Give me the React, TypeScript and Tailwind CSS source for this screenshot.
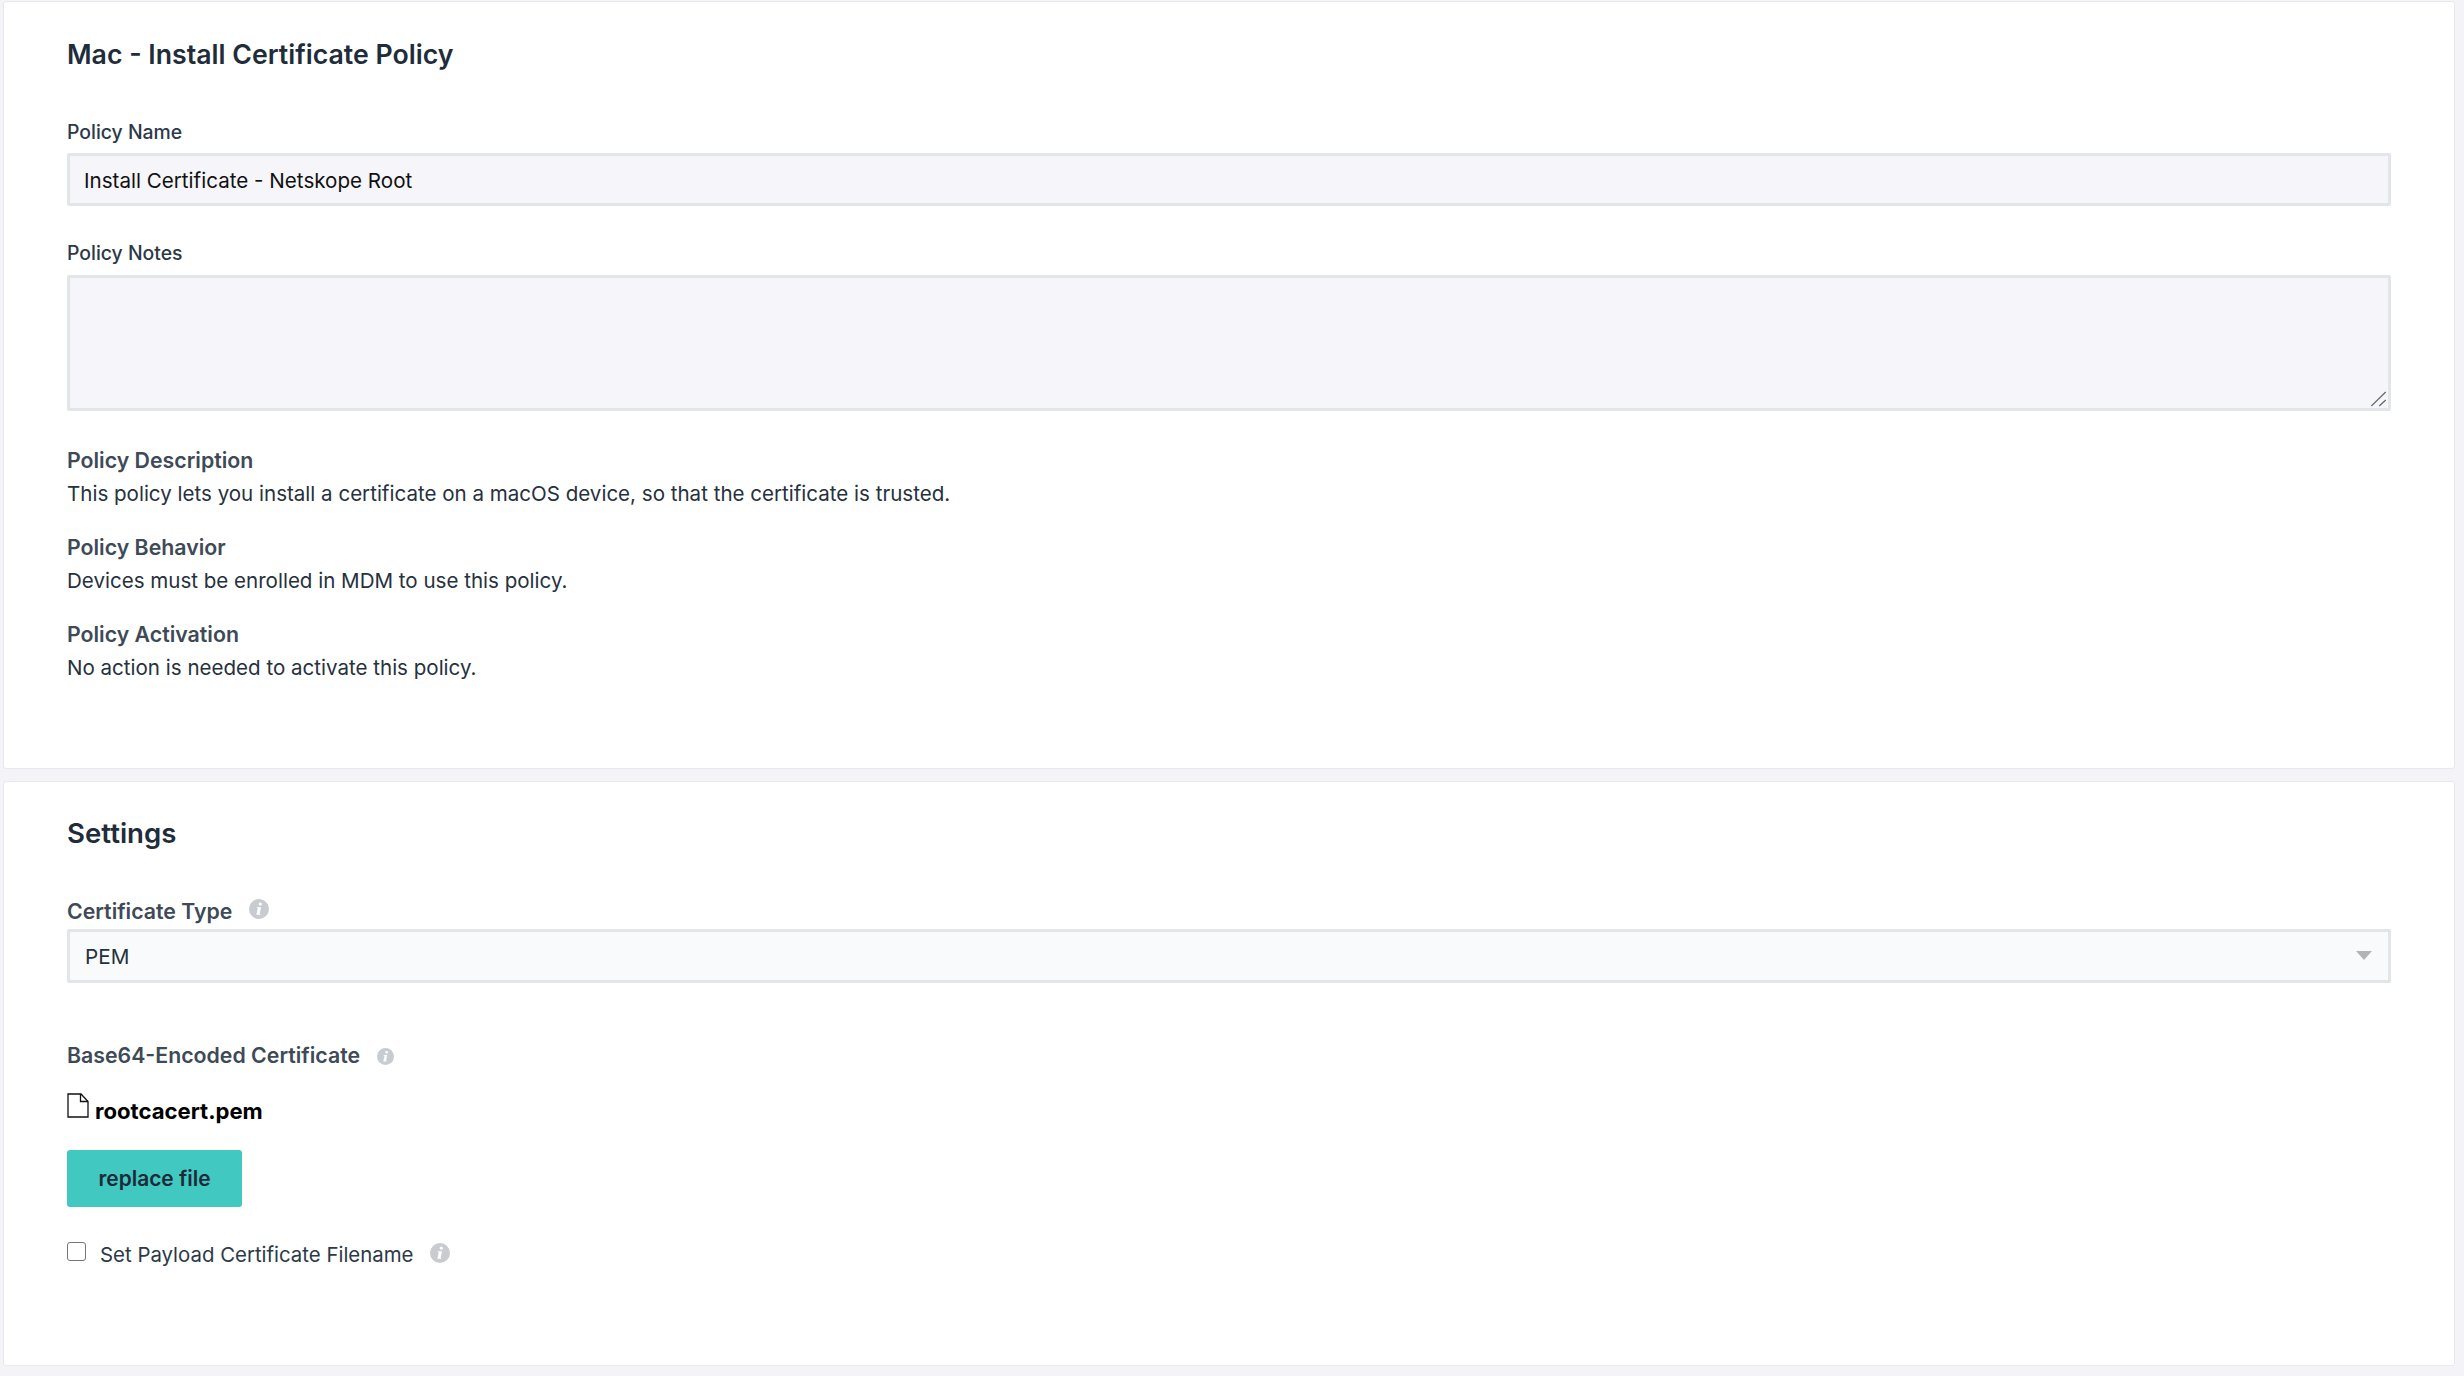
import { useState } from "react";

const font = "font-['Inter',sans-serif]";

function InfoIcon({ size = 20 }: { size?: number }) {
  return (
    <svg width={size} height={size} viewBox="0 0 20 20" className="shrink-0">
      <circle cx="10" cy="10" r="10" fill="#c8ccd0" />
      <path d="M11.3 3.4a1.7 1.7 0 1 1 0 3.4 1.7 1.7 0 0 1 0-3.4zM7.9 8.3h4.2l-1.4 6.3c0 .3.1.4.8.3l-.2.9H7.4l1.3-6.4c.1-.3-.1-.4-1-.4z" fill="#fff" />
    </svg>
  );
}

function FileIcon() {
  return (
    <svg width="22" height="25" viewBox="0 0 22 25" fill="none" stroke="#111" strokeWidth="1.3" className="shrink-0">
      <path d="M1 1h13l7 7.5V24H1z" />
      <path d="M13.5 1v7.5H21" />
    </svg>
  );
}

function PolicyText({ title, text }: { title: string; text: string }) {
  return (
    <div className="mb-[23px]">
      <h5 className="text-[21.3px] leading-[30px] font-semibold text-[#3e4a57]">{title}</h5>
      <p className="mt-[4px] text-[20.55px] leading-[30px] text-[#26313d]">{text}</p>
    </div>
  );
}

export default function App() {
  const [notes, setNotes] = useState("");

  return (
    <div className={`${font} min-h-[1376px] bg-[#f3f3f8] pl-[3px] pr-[9px] pt-px pb-[10px]`}>
      {/* Policy card */}
      <section className="h-[768px] rounded-[3px] border border-[#e8e9ec] bg-white pl-[63px] pr-[63px] pt-[33px]">
        <h2 className="text-[26.7px] leading-[38px] font-semibold text-[#1f2d3a]">Mac - Install Certificate Policy</h2>

        <label className="mt-[46px] block text-[19.4px] leading-[26px] font-medium text-[#2c3947]">Policy Name</label>
        <input
          readOnly
          value="Install Certificate - Netskope Root"
          className="mt-[8px] block h-[53px] w-full rounded-[2px] border-[3px] border-[#e3e6e9] bg-[#f5f5fa] px-[14px] pt-[2px] text-[20.6px] text-[#111] outline-none"
        />

        <label className="mt-[34px] block text-[19.4px] leading-[26px] font-medium text-[#2c3947]">Policy Notes</label>
        <div className="relative mt-[9px]">
          <textarea
            value={notes}
            onChange={(e) => setNotes(e.target.value)}
            className="block h-[136px] w-full resize-none rounded-[2px] border-[3px] border-[#e3e6e9] bg-[#f5f5fa] px-[14px] py-2 text-[20.6px] outline-none"
          />
          {/* resize grip */}
          <svg width="16" height="16" viewBox="0 0 16 16" stroke="#666" strokeWidth="1.2" className="pointer-events-none absolute bottom-[4px] right-[4px]">
            <path d="M.3 15 14.7 1M8.3 15l6.4-6" />
          </svg>
        </div>

        <div className="mt-[34px]">
          <PolicyText
            title="Policy Description"
            text="This policy lets you install a certificate on a macOS device, so that the certificate is trusted."
          />
          <PolicyText title="Policy Behavior" text="Devices must be enrolled in MDM to use this policy." />
          <PolicyText title="Policy Activation" text="No action is needed to activate this policy." />
        </div>
      </section>

      {/* Settings card */}
      <section className="mt-[12px] h-[585px] rounded-[3px] border border-[#e8e9ec] bg-white pl-[63px] pr-[63px] pt-[31px]">
        <h2 className="text-[27.6px] leading-[40px] font-semibold text-[#1f2d3a]">Settings</h2>

        <div className="mt-[43px] flex items-center gap-[17px]">
          <span className="text-[21.3px] leading-[30px] font-semibold text-[#3e4a57]">Certificate Type</span>
          <span className="mb-[4px]">
            <InfoIcon />
          </span>
        </div>
        <div className="relative mt-[3px] flex h-[54px] items-center rounded-[2px] border-[3px] border-[#e3e6e9] bg-[#f9fafc] px-[15px] pt-[2px] text-[20.7px] text-[#26313d]">
          PEM
          <span className="absolute right-[16px] top-[19px] h-0 w-0 border-x-[8px] border-t-[9px] border-x-transparent border-t-[#b3b3b3]" />
        </div>

        <div className="mt-[57px] flex items-center gap-[17px]">
          <span className="text-[21.3px] leading-[30px] font-semibold text-[#3e4a57]">Base64-Encoded Certificate</span>
          <span className="mt-[2px]">
            <InfoIcon size={17} />
          </span>
        </div>

        <div className="mt-[23px] flex items-start gap-[6px]">
          <FileIcon />
          <span className="mt-[3px] text-[22.1px] leading-[30px] font-bold text-black">rootcacert.pem</span>
        </div>

        <button className="mt-[24px] block h-[57px] w-[175px] rounded-[3px] bg-[#41c9c1] text-[20.9px] font-semibold text-[#1c2b39]">
          replace file
        </button>

        <div className="mt-[33px] flex items-start">
          <input type="checkbox" className="mt-[2px] h-[19px] w-[19px] appearance-none rounded-[3px] border-[1.5px] border-[#767676] bg-white" />
          <span className="ml-[14px] text-[20.4px] leading-[30px] text-[#2c3947]">Set Payload Certificate Filename</span>
          <span className="ml-[17px] mt-[3px]">
            <InfoIcon />
          </span>
        </div>
      </section>
    </div>
  );
}
